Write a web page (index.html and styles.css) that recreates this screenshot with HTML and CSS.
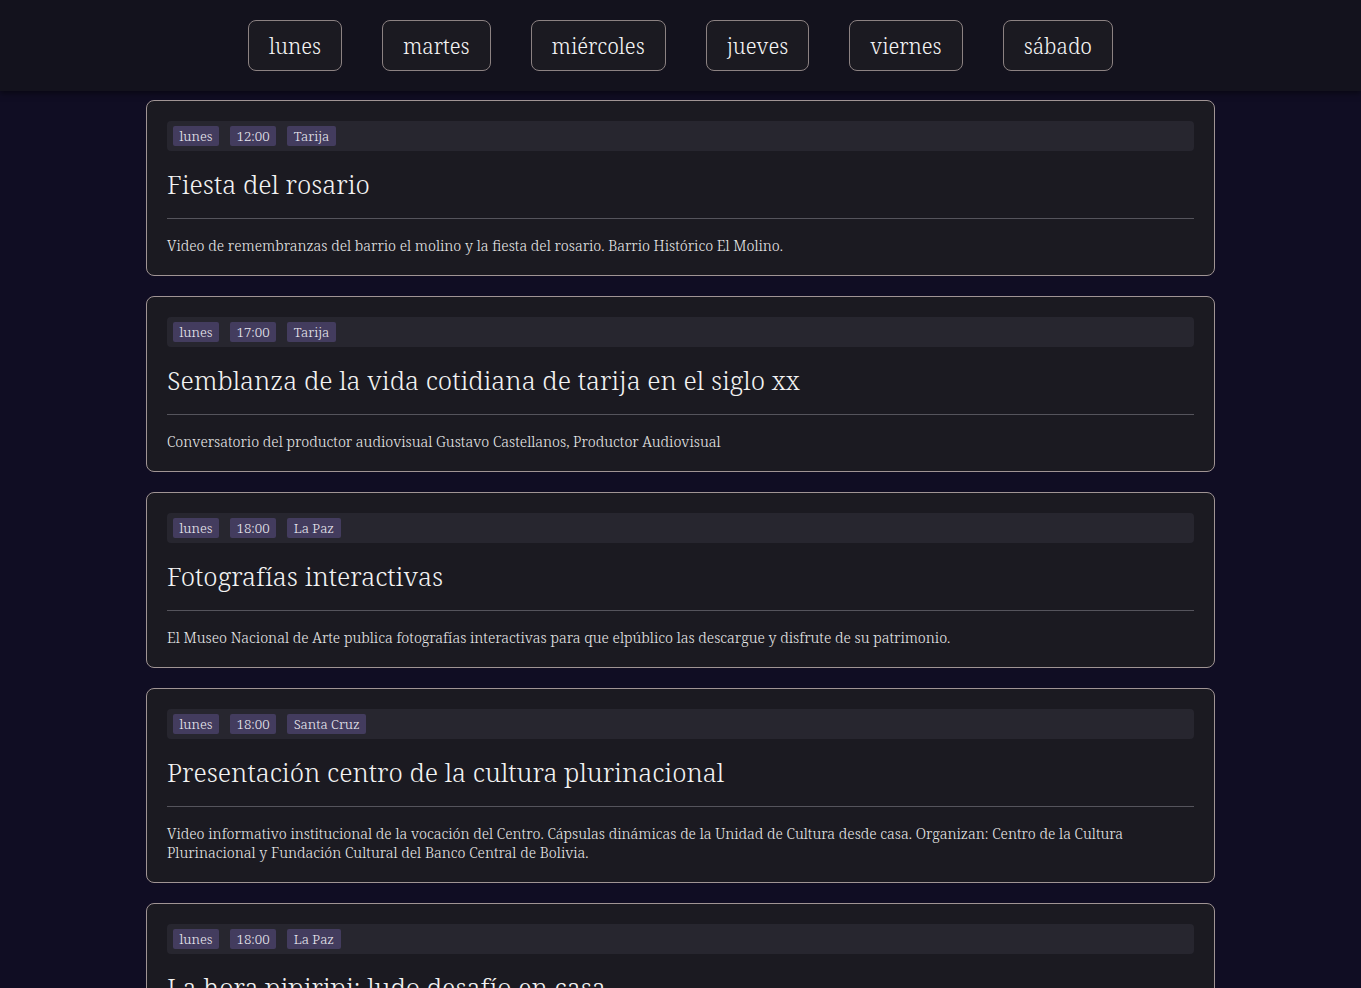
FILE: index.html
```html
<!DOCTYPE html>
<html lang="es">
<head>
<meta charset="utf-8">
<title>Agenda</title>
<link rel="stylesheet" href="styles.css">
</head>
<body>
<header class="topbar">
  <nav class="days">
    <button class="day">lunes</button>
    <button class="day">martes</button>
    <button class="day">miércoles</button>
    <button class="day">jueves</button>
    <button class="day">viernes</button>
    <button class="day">sábado</button>
  </nav>
</header>
<main class="list">
  <article class="card">
    <div class="tags"><span class="tag">lunes</span><span class="tag">12:00</span><span class="tag">Tarija</span></div>
    <h2 class="title">Fiesta del rosario</h2>
    <hr class="rule">
    <p class="desc">Video de remembranzas del barrio el molino y la fiesta del rosario. Barrio Histórico El Molino.</p>
  </article>
  <article class="card">
    <div class="tags"><span class="tag">lunes</span><span class="tag">17:00</span><span class="tag">Tarija</span></div>
    <h2 class="title">Semblanza de la vida cotidiana de tarija en el siglo xx</h2>
    <hr class="rule">
    <p class="desc">Conversatorio del productor audiovisual Gustavo Castellanos, Productor Audiovisual</p>
  </article>
  <article class="card">
    <div class="tags"><span class="tag">lunes</span><span class="tag">18:00</span><span class="tag">La Paz</span></div>
    <h2 class="title">Fotografías interactivas</h2>
    <hr class="rule">
    <p class="desc">El Museo Nacional de Arte publica fotografías interactivas para que elpúblico las descargue y disfrute de su patrimonio.</p>
  </article>
  <article class="card">
    <div class="tags"><span class="tag">lunes</span><span class="tag">18:00</span><span class="tag">Santa Cruz</span></div>
    <h2 class="title">Presentación centro de la cultura plurinacional</h2>
    <hr class="rule">
    <p class="desc">Video informativo institucional de la vocación del Centro. Cápsulas dinámicas de la Unidad de Cultura desde casa. Organizan: Centro de la Cultura Plurinacional y Fundación Cultural del Banco Central de Bolivia.</p>
  </article>
  <article class="card">
    <div class="tags"><span class="tag">lunes</span><span class="tag">18:00</span><span class="tag">La Paz</span></div>
    <h2 class="title">La hora pipiripi: ludo desafío en casa</h2>
    <hr class="rule">
    <p class="desc">Juego en familia desde casa.</p>
  </article>
</main>
</body>
</html>
```

FILE: styles.css
```css
* { box-sizing: border-box; }
html, body { margin: 0; padding: 0; }
body {
  background: #100d23;
  color: #f2f2f2;
  font-family: "Noto Serif", "DejaVu Serif", serif;
}
.topbar {
  height: 91px;
  background: #13121d;
  box-shadow: 0 2px 6px rgba(0,0,0,0.5);
  display: flex;
  align-items: center;
  justify-content: center;
}
.days {
  display: flex;
  gap: 40px;
}
.day {
  height: 51px;
  padding: 0 20px;
  background: #1b1a21;
  color: #f4f4f4;
  border: 1px solid #8c8282;
  border-radius: 8px;
  font-family: inherit;
  font-size: 21px;
  font-weight: 300;
}
.list {
  width: 1069px;
  margin: 0 auto;
  padding-top: 9px;
  display: flex;
  flex-direction: column;
  gap: 20px;
}
.card {
  background: #1b1a21;
  border: 1px solid #a09494;
  border-radius: 8px;
  padding: 20px;
}
.tags {
  background: #27262f;
  border-radius: 4px;
  padding: 5px 6px;
  display: flex;
  gap: 11px;
}
.tag {
  background: #433c5e;
  color: #ecebf2;
  font-size: 13.3px;
  line-height: 20px;
  padding: 0 6.5px;
  border-radius: 2px;
  font-weight: 300;
}
.title {
  margin: 16px 0 0;
  font-size: 25.8px;
  line-height: 34px;
  font-weight: 300;
}
.rule {
  margin: 17px 0 0;
  border: 0;
  border-top: 1px solid #55545c;
}
.desc {
  margin: 17px 0 0;
  font-size: 14.3px;
  line-height: 19px;
  font-weight: 300;
  color: #ececec;
}
```
